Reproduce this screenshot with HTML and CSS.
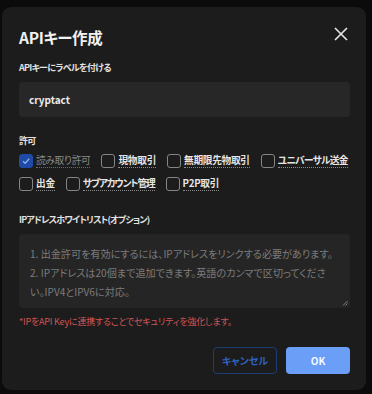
FILE: index.html
```html
<!DOCTYPE html>
<html lang="ja">
<head>
<meta charset="utf-8">
<link rel="stylesheet" href="styles.css">
</head>
<body>
<div class="dialog">
  <div class="header">
    <h1 class="title">APIキー作成</h1>
    <svg class="close" width="14" height="14" viewBox="0 0 14 14"><path d="M1 1L13 13M13 1L1 13" stroke="#e6e6e6" stroke-width="1.6" fill="none"/></svg>
  </div>
  <div class="label">APIキーにラベルを付ける</div>
  <div class="input">cryptact</div>
  <div class="label perm-label">許可</div>
  <div class="perms">
    <div class="perm disabled"><span class="cb checked"><svg width="10" height="10" viewBox="0 0 10 10"><path d="M2 5.2L4.2 7.3L8.2 2.8" stroke="#8fb0e6" stroke-width="1.3" fill="none"/></svg></span><span class="pl">読み取り許可</span></div>
    <div class="perm"><span class="cb"></span><span class="pl">現物取引</span></div>
    <div class="perm"><span class="cb"></span><span class="pl">無期限先物取引</span></div>
    <div class="perm"><span class="cb"></span><span class="pl pl-tight">ユニバーサル送金</span></div>
    <div class="perm"><span class="cb"></span><span class="pl">出金</span></div>
    <div class="perm"><span class="cb"></span><span class="pl pl-tighter">サブアカウント管理</span></div>
    <div class="perm"><span class="cb"></span><span class="pl">P2P取引</span></div>
  </div>
  <div class="label ip-label">IPアドレスホワイトリスト(オプション)</div>
  <div class="textarea">
    <p>1. 出金許可を有効にするには、IPアドレスをリンクする必要があります。</p>
    <p>2. IPアドレスは20個まで追加できます。英語のカンマで区切ってくださ<br>い。IPV4とIPV6に対応。</p>
    <svg class="grip" width="6" height="6" viewBox="0 0 6 6"><path d="M5.5 1L1 5.5M5.5 3.5L3.5 5.5" stroke="#8a8a8a" stroke-width="0.9"/></svg>
  </div>
  <div class="warn">*IPをAPI Keyに連携することでセキュリティを強化します。</div>
  <div class="actions">
    <button class="btn cancel">キャンセル</button>
    <button class="btn ok">OK</button>
  </div>
</div>
</body>
</html>
```

FILE: styles.css
```css
html, body {
  margin: 0;
  padding: 0;
  background: #0b0b0b;
  width: 372px;
  height: 394px;
  overflow: hidden;
}
body {
  font-family: "Noto Sans CJK JP", "Noto Sans", sans-serif;
  font-feature-settings: "palt";
  color: #e8e8e8;
  padding: 7px 6px 4px 2px;
  box-sizing: border-box;
}
.dialog {
  background: #1c1c1c;
  border-radius: 9px;
  height: 383px;
  box-sizing: border-box;
  padding: 17px 16px 0 17px;
  display: flex;
  flex-direction: column;
}
.header {
  display: flex;
  justify-content: space-between;
  align-items: center;
  height: 26px;
}
.title {
  margin: 0;
  font-size: 15.5px;
  font-weight: 700;
  color: #f2f2f2;
  letter-spacing: -0.3px;
  line-height: 26px;
}
.close {
  margin-right: 2px;
  margin-top: -6px;
}
.label {
  font-size: 9px;
  font-weight: 700;
  color: #e2e2e2;
  margin-top: 11px;
  line-height: 14px;
  letter-spacing: -0.7px;
}
.input {
  margin-top: 7px;
  height: 35px;
  background: #272727;
  border-radius: 4px;
  padding: 0 10px;
  display: flex;
  align-items: center;
  font-size: 10px;
  font-weight: 700;
  color: #ececec;
}
.perm-label {
  margin-top: 17px;
}
.perms {
  margin-top: 4px;
  display: flex;
  flex-wrap: wrap;
  column-gap: 11px;
  row-gap: 6px;
}
.perm {
  display: flex;
  align-items: center;
  gap: 3px;
  height: 17px;
}
.cb {
  width: 14px;
  height: 14px;
  box-sizing: border-box;
  border: 1px solid #858585;
  border-radius: 3px;
  display: flex;
  align-items: center;
  justify-content: center;
}
.cb.checked {
  background: #1f4aa8;
  border-color: #1f4aa8;
}
.pl {
  font-size: 9.7px;
  font-weight: 600;
  color: #e6e6e6;
  line-height: 14px;
  letter-spacing: -0.3px;
  border-bottom: 1px dotted #8a8a8a;
}
.pl-tight {
  letter-spacing: -0.7px;
}
.pl-tighter {
  letter-spacing: -1.1px;
}
.perm.disabled .pl {
  color: #8a8a8a;
  font-weight: 400;
  border-bottom-color: #6a6a6a;
}
.ip-label {
  margin-top: 21px;
  font-size: 9px;
  letter-spacing: -0.8px;
}
.textarea {
  position: relative;
  margin-top: 7px;
  height: 74px;
  background: #252525;
  border-radius: 4px;
  padding: 10px 11px 0 11px;
  box-sizing: border-box;
  font-size: 10.1px;
  line-height: 19px;
  color: #7c7c7c;
}
.textarea p {
  margin: 0;
  white-space: nowrap;
}
.grip {
  position: absolute;
  right: 2px;
  bottom: 2px;
}
.warn {
  margin-top: 8px;
  font-size: 9px;
  letter-spacing: -0.2px;
  color: #d25555;
  line-height: 12px;
}
.actions {
  margin-top: 19px;
  display: flex;
  justify-content: flex-end;
  gap: 9px;
}
.btn {
  width: 64px;
  height: 27px;
  border-radius: 4px;
  font-family: inherit;
  font-feature-settings: "palt";
  font-size: 10px;
  font-weight: 700;
  padding: 0;
}
.cancel {
  background: transparent;
  border: 1px solid #1d3d70;
  color: #2f62c0;
}
.ok {
  background: #6b9ef6;
  border: none;
  color: #f4f7ff;
}
```
